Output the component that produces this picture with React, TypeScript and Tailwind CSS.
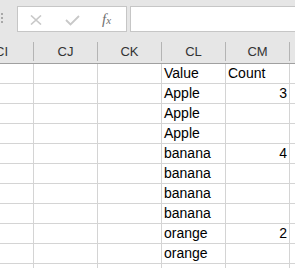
import React from "react";

const cols = ["CI", "CJ", "CK", "CL", "CM", ""];
const rows: [string, string][] = [
  ["Value", "Count"],
  ["Apple", "3"],
  ["Apple", ""],
  ["Apple", ""],
  ["banana", "4"],
  ["banana", ""],
  ["banana", ""],
  ["banana", ""],
  ["orange", "2"],
  ["orange", ""],
  ["", ""],
];

export default function App() {
  return (
    <div
      className="w-[295px] h-[268px] overflow-hidden bg-white"
      style={{ fontFamily: '"Liberation Sans", Arial, sans-serif' }}
    >
      {/* toolbar */}
      <div className="relative h-[41px] bg-[#e6e6e6]">
        <div className="absolute left-[1px] top-[13px] flex flex-col gap-[2px]">
          <div className="w-[2px] h-[2px] bg-[#a8a8a8]" />
          <div className="w-[2px] h-[2px] bg-[#a8a8a8]" />
          <div className="w-[2px] h-[2px] bg-[#a8a8a8]" />
        </div>
        <div className="absolute left-[17px] top-[6px] w-[110px] h-[26px] bg-white border border-[#c6c6c6] flex items-center">
          <svg className="absolute left-[12px] top-[8px]" width="12" height="10" viewBox="0 0 12 10">
            <path d="M1 0.5 L11 9.5 M11 0.5 L1 9.5" stroke="#c8c8c8" strokeWidth="1.6" fill="none" />
          </svg>
          <svg className="absolute left-[47px] top-[8px]" width="15" height="11" viewBox="0 0 15 11">
            <path d="M1 5 L5.5 9.5 L14 1" stroke="#c8c8c8" strokeWidth="1.8" fill="none" />
          </svg>
          <span
            className="absolute left-[84px] top-[3px] text-[15px] italic text-[#707070] leading-[18px]"
            style={{ fontFamily: '"Liberation Serif", serif' }}
          >
            f<span className="text-[11px]">x</span>
          </span>
        </div>
        <div className="absolute left-[130px] top-[6px] w-[200px] h-[26px] bg-white border border-[#c6c6c6]" />
      </div>
      {/* header row */}
      <div className="h-[21px] pt-[1px] bg-[#e6e6e6] border-b border-[#a0a0a0] flex ml-[-30px] box-content">
        {cols.map((c, j) => (
          <div
            key={j}
            className="w-[64px] shrink-0 h-[19px] border-r border-[#b4b4b4] flex items-center justify-center text-[13px] text-[#333]"
          >
            {c}
          </div>
        ))}
      </div>
      {/* data rows */}
      {rows.map((r, i) => (
        <div key={i} className="flex ml-[-30px]">
          {cols.map((c, j) => {
            const v = j === 3 ? r[0] : j === 4 ? r[1] : "";
            const isNum = /^\d+$/.test(v);
            return (
              <div
                key={j}
                className={
                  "w-[64px] shrink-0 h-[20px] border-r border-b border-[#d4d4d4] flex items-end pb-[2px] text-[14px] leading-[16px] text-black " +
                  (isNum ? "justify-end pr-[2px]" : "pl-[2px]")
                }
              >
                {v}
              </div>
            );
          })}
        </div>
      ))}
    </div>
  );
}
